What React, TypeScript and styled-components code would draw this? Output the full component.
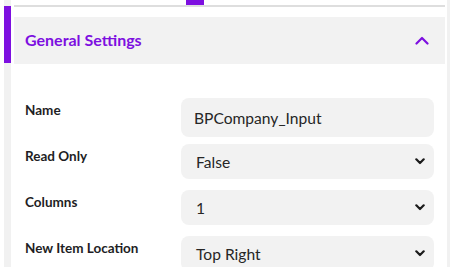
import React from "react";
import styled, { createGlobalStyle } from "styled-components";

const GlobalStyle = createGlobalStyle`
  html, body {
    margin: 0;
    padding: 0;
    background: #ffffff;
    font-family: Lato, "Open Sans", sans-serif;
  }
`;

const purple = "#7d0fe0";

interface IField {
  label: string;
  value: string;
  kind: "input" | "select";
}

const fields: IField[] = [
  { label: "Name", value: "BPCompany_Input", kind: "input" },
  { label: "Read Only", value: "False", kind: "select" },
  { label: "Columns", value: "1", kind: "select" },
  { label: "New Item Location", value: "Top Right", kind: "select" },
];

const ChevronDown = () => (
  <svg width="10" height="7" viewBox="0 0 10 7">
    <path
      d="M1.3 1.3 L5 5 L8.7 1.3"
      fill="none"
      stroke="#1b1b1b"
      strokeWidth="2.2"
      strokeLinecap="round"
      strokeLinejoin="round"
    />
  </svg>
);

const ChevronUp = () => (
  <svg width="14" height="9" viewBox="0 0 14 9">
    <path
      d="M1.5 7.5 L7 2 L12.5 7.5"
      fill="none"
      stroke={purple}
      strokeWidth="2.2"
      strokeLinecap="round"
      strokeLinejoin="round"
    />
  </svg>
);

const App = () => {
  return (
    <>
      <GlobalStyle />
      <Page>
        <Rail>
          <RailIndicator />
        </Rail>
        <Main>
          <TabBar>
            <TabIndicator />
          </TabBar>
          <SectionHeader>
            <Title>General Settings</Title>
            <ChevronUp />
          </SectionHeader>
          <Form>
            {fields.map((f) => (
              <Row key={f.label}>
                <Label>{f.label}</Label>
                {f.kind === "input" ? (
                  <TextBox>{f.value}</TextBox>
                ) : (
                  <SelectBox>
                    <span>{f.value}</span>
                    <ChevronDown />
                  </SelectBox>
                )}
              </Row>
            ))}
          </Form>
        </Main>
        <RightEdge />
      </Page>
    </>
  );
};

export default App;

export const Page = styled.div`
  display: flex;
  width: 450px;
  height: 267px;
  overflow: hidden;
  padding-left: 4px;
  box-sizing: border-box;
`;

export const Rail = styled.div`
  width: 7px;
  flex-shrink: 0;
  background: #f1f1f1;
  display: flex;
  flex-direction: column;
`;

export const RailIndicator = styled.div`
  margin-top: 6px;
  height: 57px;
  flex-shrink: 0;
  background: ${purple};
`;

export const Main = styled.div`
  width: 431px;
  flex-shrink: 0;
  margin-left: 3px;
  display: flex;
  flex-direction: column;
`;

export const RightEdge = styled.div`
  width: 3px;
  flex-shrink: 0;
  margin-left: 2px;
  background: #f1f1f1;
`;

export const TabBar = styled.div`
  height: 5px;
  flex-shrink: 0;
  border-bottom: 2px solid #dedede;
  display: flex;
  padding-left: 172px;
`;

export const TabIndicator = styled.div`
  width: 18px;
  height: 5px;
  background: ${purple};
`;

export const SectionHeader = styled.div`
  margin-top: 10px;
  height: 47px;
  flex-shrink: 0;
  background: #f2f2f2;
  display: flex;
  align-items: center;
  justify-content: space-between;
  padding: 0 16px 0 11px;
`;

export const Title = styled.div`
  color: ${purple};
  font-size: 16px;
  font-weight: 700;
  padding-bottom: 2px;
`;

export const Form = styled.div`
  display: flex;
  flex-direction: column;
  flex-shrink: 0;
  padding: 34px 11px 0 11px;
`;

export const Row = styled.div`
  display: grid;
  grid-template-columns: 156px 1fr;
  height: 46px;
  flex-shrink: 0;
  align-items: start;
`;

export const Label = styled.div`
  color: #1e1e24;
  font-size: 13.5px;
  font-weight: 700;
  line-height: 16px;
  padding-top: 4px;
`;

export const TextBox = styled.div`
  height: 39px;
  border-radius: 8px;
  background: #f2f2f2;
  display: flex;
  align-items: center;
  padding: 0 13px;
  font-size: 15.6px;
  color: #262626;
`;

export const SelectBox = styled.div`
  height: 35px;
  border-radius: 8px;
  background: #f2f2f2;
  display: flex;
  align-items: center;
  justify-content: space-between;
  padding: 0 9px 0 15px;
  font-size: 15.6px;
  color: #262626;
`;
